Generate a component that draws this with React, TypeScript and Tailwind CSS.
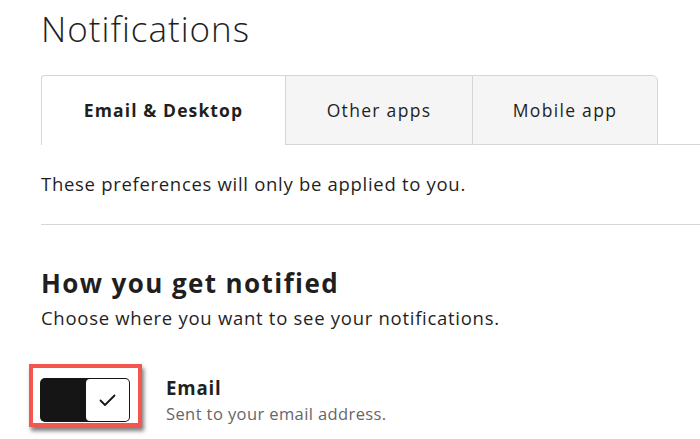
import React from 'react';

const tabs = [
  { label: 'Email & Desktop', active: true, w: 'w-[244px]' },
  { label: 'Other apps', active: false, w: 'w-[187px]' },
  { label: 'Mobile app', active: false, w: 'w-[186px]' },
];

export default function App() {
  return (
    <div className="h-[439px] w-[700px] overflow-hidden bg-white text-[#1f1f1f] font-['Open_Sans',sans-serif]">
      <div className="pl-[41px] pt-[7px]">
        <h1 className="text-[35px] font-light leading-[44px] tracking-[1px]">Notifications</h1>

        {/* Tabs */}
        <div className="mt-[24px] flex h-[70px]">
          {tabs.map((t, i) => (
            <div
              key={t.label}
              className={
                t.active
                  ? `${t.w} flex items-center justify-center rounded-tl-[4px] border-l border-t border-[#d6d6d6] bg-white text-[17.5px] font-bold tracking-[1.1px]`
                  : `${t.w} flex items-center justify-center border-l border-t border-b border-[#d6d6d6] bg-[#f5f5f5] text-[17.5px] tracking-[1.3px] ${
                      i === tabs.length - 1 ? 'rounded-tr-[6px] border-r' : ''
                    }`
              }
            >
              {t.label}
            </div>
          ))}
          <div className="flex-1 border-b border-[#d6d6d6]" />
        </div>

        <p className="mt-[26px] text-[18.5px] leading-[26px] tracking-[0.7px]">
          These preferences will only be applied to you.
        </p>
        <div className="mt-[27px] h-px bg-[#d6d6d6]" />

        <h2 className="mt-[42px] text-[26px] font-bold leading-[32px] tracking-[1.4px]">How you get notified</h2>
        <p className="mt-[6px] text-[18.5px] leading-[26px] tracking-[0.72px]">
          Choose where you want to see your notifications.
        </p>

        {/* Email toggle row */}
        <div className="mt-[33px] flex items-start">
          <div className="-ml-[12px] border-[4px] border-[#f2564f] pb-[1px] pl-[7px] pr-[8px] pt-[10px] shadow-[2px_4px_4px_rgba(0,0,0,0.5)]">
            <div className="flex h-[44px] w-[90px] rounded-[5px] bg-[#151515] p-[1px]">
              <div className="flex-1" />
              <div className="flex w-[43px] items-center justify-center rounded-[4px] bg-white">
                <svg width="17" height="13" viewBox="0 0 17 13" fill="none">
                  <path d="M1.5 6.5 L6 11 L15.5 1.5" stroke="#151515" strokeWidth="1.8" strokeLinecap="round" strokeLinejoin="round" />
                </svg>
              </div>
            </div>
          </div>
          <div className="ml-[24px] mt-[12px]">
            <div className="text-[18.7px] font-bold leading-[24px] tracking-[0.8px]">Email</div>
            <div className="mt-[3px] text-[16.5px] leading-[22px] tracking-[0.4px] text-[#666666]">
              Sent to your email address.
            </div>
          </div>
        </div>
      </div>
    </div>
  );
}
